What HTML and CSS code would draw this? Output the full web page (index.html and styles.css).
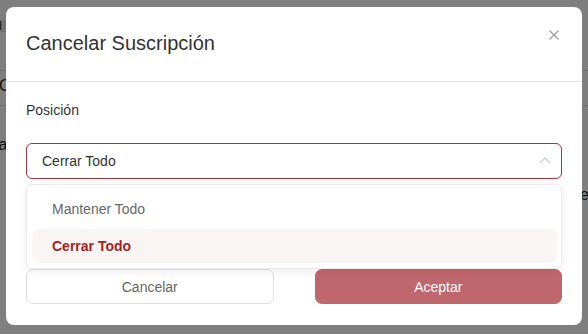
FILE: index.html
```html
<!DOCTYPE html>
<html lang="es">
<head>
<meta charset="utf-8">
<title>Cancelar Suscripción</title>
<link rel="stylesheet" href="styles.css">
</head>
<body>
<div class="page">
  <div class="page-bar">Ord</div>
  <div class="page-row">Cuenta</div>
  <div class="page-row page-row-last"></div>
  <div class="page-text">Una</div>
  <div class="page-right">Te</div>
</div>
<div class="overlay">
  <div class="modal">
    <div class="modal-header">
      <h2 class="modal-title">Cancelar Suscripción</h2>
      <button class="close" aria-label="Cerrar">
        <svg width="10" height="10" viewBox="0 0 10 10"><path d="M0.5 0.5L9.5 9.5M9.5 0.5L0.5 9.5" stroke="#999" stroke-width="1.1" fill="none"/></svg>
      </button>
    </div>
    <div class="modal-body">
      <div class="label">Posición</div>
      <div class="select-wrap">
        <div class="select">
          <span>Cerrar Todo</span>
          <svg class="chev" width="12" height="7" viewBox="0 0 12 7"><path d="M0.8 6.2L6 1L11.2 6.2" stroke="#c8c8c8" stroke-width="1.2" fill="none"/></svg>
        </div>
        <div class="dropdown">
          <div class="option">Mantener Todo</div>
          <div class="option selected">Cerrar Todo</div>
        </div>
      </div>
    </div>
    <div class="modal-footer">
      <button class="btn btn-cancel">Cancelar</button>
      <button class="btn btn-ok">Aceptar</button>
    </div>
  </div>
</div>
</body>
</html>
```
FILE: styles.css
```css
html, body {
  margin: 0;
  padding: 0;
}
body {
  width: 588px;
  height: 334px;
  overflow: hidden;
  font-family: "Liberation Sans", Arial, sans-serif;
  background: #fff;
  position: relative;
}
.page {
  padding-top: 20px;
  color: #222;
  font-size: 14px;
}
.page-bar {
  margin-left: -18px;
  width: 60px;
  height: 12px;
  line-height: 12px;
  font-size: 12px;
  background: #e8e8e8;
  color: #333;
}
.page-row {
  margin-top: 38px;
  border-top: 1px solid #ddd;
  height: 34px;
  line-height: 30px;
  margin-left: -1px;
  font-size: 16px;
}
.page-row-last {
  margin-top: 0;
  height: 0;
}
.page-text {
  margin-top: 30px;
  margin-left: -22px;
  font-size: 16px;
}
.page-right {
  margin-top: 32px;
  margin-left: 572px;
  font-size: 16px;
}
.overlay {
  position: absolute;
  inset: 0;
  background: rgba(0, 0, 0, 0.5);
  padding: 7px 6px 0 6px;
}
.modal {
  width: 576px;
  height: 318px;
  background: #fff;
  border-radius: 8px;
  display: flex;
  flex-direction: column;
}
.modal-header {
  border-bottom: 1px solid #e4e4e4;
  display: flex;
  align-items: center;
  justify-content: space-between;
  padding: 0 23px 0 20px;
  box-sizing: border-box;
  height: 75px;
}
.modal-title {
  margin: 0;
  font-size: 20px;
  font-weight: normal;
  color: #333;
  line-height: 24px;
  padding-bottom: 2px;
}
.close {
  border: 0;
  background: none;
  padding: 0;
  width: 10px;
  height: 10px;
  display: flex;
  margin-bottom: 19px;
}
.modal-body {
  padding: 18px 20px 0 20px;
  flex: 1;
}
.label {
  font-size: 14px;
  color: #333;
  line-height: 20px;
  height: 20px;
  margin-bottom: 23px;
}
.select-wrap {
  position: relative;
}
.select {
  height: 36px;
  box-sizing: border-box;
  border: 1px solid #a8323c;
  border-radius: 6px;
  display: flex;
  align-items: center;
  justify-content: space-between;
  padding: 0 10px 0 15px;
  font-size: 14px;
  color: #333;
}
.chev {
  margin-top: -1px;
}
.dropdown {
  position: absolute;
  top: 41px;
  left: 0;
  right: 0;
  background: #fff;
  border: 1px solid #ececf0;
  border-radius: 6px;
  box-shadow: 0 2px 10px rgba(0, 0, 0, 0.08);
  padding: 7px 4px 5px 5px;
  display: flex;
  flex-direction: column;
  gap: 3px;
  z-index: 2;
}
.option {
  height: 34px;
  line-height: 35px;
  padding-left: 20px;
  font-size: 14px;
  color: #666;
  border-radius: 8px;
}
.option.selected {
  background: #f9f5f5;
  color: #a61e24;
  font-weight: bold;
}
.modal-footer {
  display: flex;
  gap: 41px;
  padding: 0 20px 21px 20px;
}
.btn {
  flex: 1;
  height: 35px;
  border-radius: 7px;
  font-family: "Liberation Sans", Arial, sans-serif;
  font-size: 14px;
  padding: 0;
}
.btn-cancel {
  background: #fff;
  border: 1px solid #dcdfe6;
  color: #666;
}
.btn-ok {
  background: #c0676d;
  border: 1px solid #c0676d;
  color: #fff;
}
```
